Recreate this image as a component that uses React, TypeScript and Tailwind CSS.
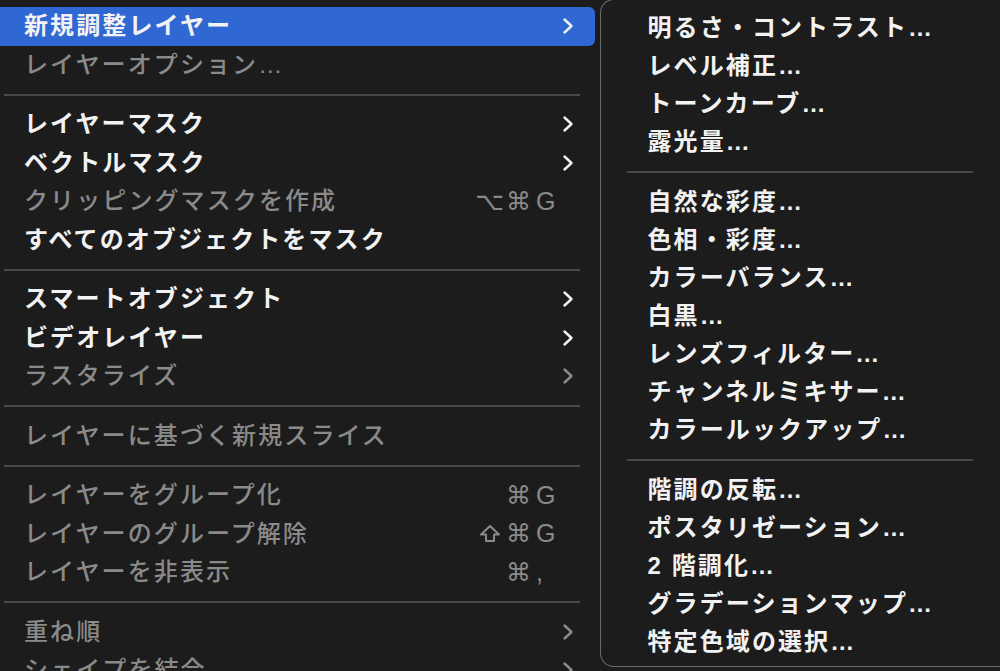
import React from "react";

type Item =
  | { sep: true }
  | {
      sep?: false;
      label: string;
      disabled?: boolean;
      sub?: boolean;
      mods?: string;
      keyc?: string;
      active?: boolean;
    };

const mainItems: Item[] = [
  { label: "新規調整レイヤー", sub: true, active: true },
  { label: "レイヤーオプション…", disabled: true },
  { sep: true },
  { label: "レイヤーマスク", sub: true },
  { label: "ベクトルマスク", sub: true },
  { label: "クリッピングマスクを作成", disabled: true, mods: "⌥⌘", keyc: "G" },
  { label: "すべてのオブジェクトをマスク" },
  { sep: true },
  { label: "スマートオブジェクト", sub: true },
  { label: "ビデオレイヤー", sub: true },
  { label: "ラスタライズ", disabled: true, sub: true },
  { sep: true },
  { label: "レイヤーに基づく新規スライス", disabled: true },
  { sep: true },
  { label: "レイヤーをグループ化", disabled: true, mods: "⌘", keyc: "G" },
  { label: "レイヤーのグループ解除", disabled: true, mods: "⇧⌘", keyc: "G" },
  { label: "レイヤーを非表示", disabled: true, mods: "⌘", keyc: "," },
  { sep: true },
  { label: "重ね順", disabled: true, sub: true },
  { label: "シェイプを結合", disabled: true, sub: true },
];

const subItems: Item[] = [
  { label: "明るさ・コントラスト…" },
  { label: "レベル補正…" },
  { label: "トーンカーブ…" },
  { label: "露光量…" },
  { sep: true },
  { label: "自然な彩度…" },
  { label: "色相・彩度…" },
  { label: "カラーバランス…" },
  { label: "白黒…" },
  { label: "レンズフィルター…" },
  { label: "チャンネルミキサー…" },
  { label: "カラールックアップ…" },
  { sep: true },
  { label: "階調の反転…" },
  { label: "ポスタリゼーション…" },
  { label: "2 階調化…" },
  { label: "グラデーションマップ…" },
  { label: "特定色域の選択…" },
];

function Chevron({ color }: { color: string }) {
  return (
    <svg width="12" height="18" viewBox="0 0 12 18" fill="none">
      <path
        d="M2.5 2.5 L9.5 9 L2.5 15.5"
        stroke={color}
        strokeWidth="2.4"
        strokeLinecap="round"
        strokeLinejoin="round"
      />
    </svg>
  );
}

function Shift() {
  return (
    <svg width="22" height="19" viewBox="0 0 22 19" fill="none" className="mr-[3px]">
      <path
        d="M11 2 L20 10.5 H15 V17 H7 V10.5 H2 Z"
        stroke="#8a8a8a"
        strokeWidth="2"
        strokeLinejoin="round"
      />
    </svg>
  );
}

function Mods({ s }: { s: string }) {
  return (
    <div className="w-[80px] flex justify-end items-center text-[25px] leading-none text-[#8a8a8a] font-['DejaVu_Sans',sans-serif]">
      {Array.from(s).map((c, i) =>
        c === "⇧" ? (
          <Shift key={i} />
        ) : (
          <span key={i} className="ml-[2px]">
            {c}
          </span>
        )
      )}
    </div>
  );
}

export default function App() {
  return (
    <div className="w-[1000px] h-[671px] overflow-hidden bg-[#1c1c1c] flex font-['Liberation_Sans','Noto_Sans_CJK_JP',sans-serif] select-none">
      {/* main menu */}
      <div className="w-[598px] shrink-0 flex flex-col pt-[7px]">
        {mainItems.map((it, i) =>
          it.sep ? (
            <div key={i} className="h-[21px] shrink-0 flex items-center">
              <div className="ml-[4px] w-[576px] h-[2px] bg-[#484848]" />
            </div>
          ) : (
            <div
              key={i}
              className={
                "h-[38.5px] shrink-0 flex items-center w-[595px] pl-[24px] " +
                (it.active ? "bg-[#2f68d2] rounded-r-[6px]" : "")
              }
            >
              <div
                className={
                  "flex-1 text-[24px] tracking-[2.1px] leading-none whitespace-nowrap " +
                  (it.disabled
                    ? "text-[#8a8a8a] font-medium"
                    : "text-[#f2f2f2] font-semibold")
                }
              >
                {it.label}
              </div>
              <Mods s={it.mods ?? ""} />
              <div className="w-[26px] pl-[5px] text-[25px] leading-none text-[#8a8a8a] font-['Liberation_Sans',sans-serif]">
                {it.keyc ?? ""}
              </div>
              <div className="w-[38px] pl-[5px] flex items-center">
                {it.sub ? (
                  <Chevron color={it.disabled ? "#8a8a8a" : "#f2f2f2"} />
                ) : null}
              </div>
            </div>
          )
        )}
      </div>

      {/* submenu */}
      <div className="ml-[2px] flex-1 h-[668px] -mt-[1px] bg-[#1c1c1c] border-[1.5px] border-r-0 border-[#6a6a6a] rounded-l-[14px] flex flex-col pt-[9px]">
        {subItems.map((it, i) =>
          it.sep ? (
            <div key={i} className="h-[22px] shrink-0 flex items-center">
              <div className="ml-[25.5px] w-[346px] h-[2px] bg-[#484848]" />
            </div>
          ) : (
            <div key={i} className="h-[38px] shrink-0 flex items-center pl-[46.5px]">
              <div className="text-[24px] tracking-[2.1px] leading-none whitespace-nowrap text-[#f2f2f2] font-semibold">
                {it.label}
              </div>
            </div>
          )
        )}
      </div>
    </div>
  );
}
